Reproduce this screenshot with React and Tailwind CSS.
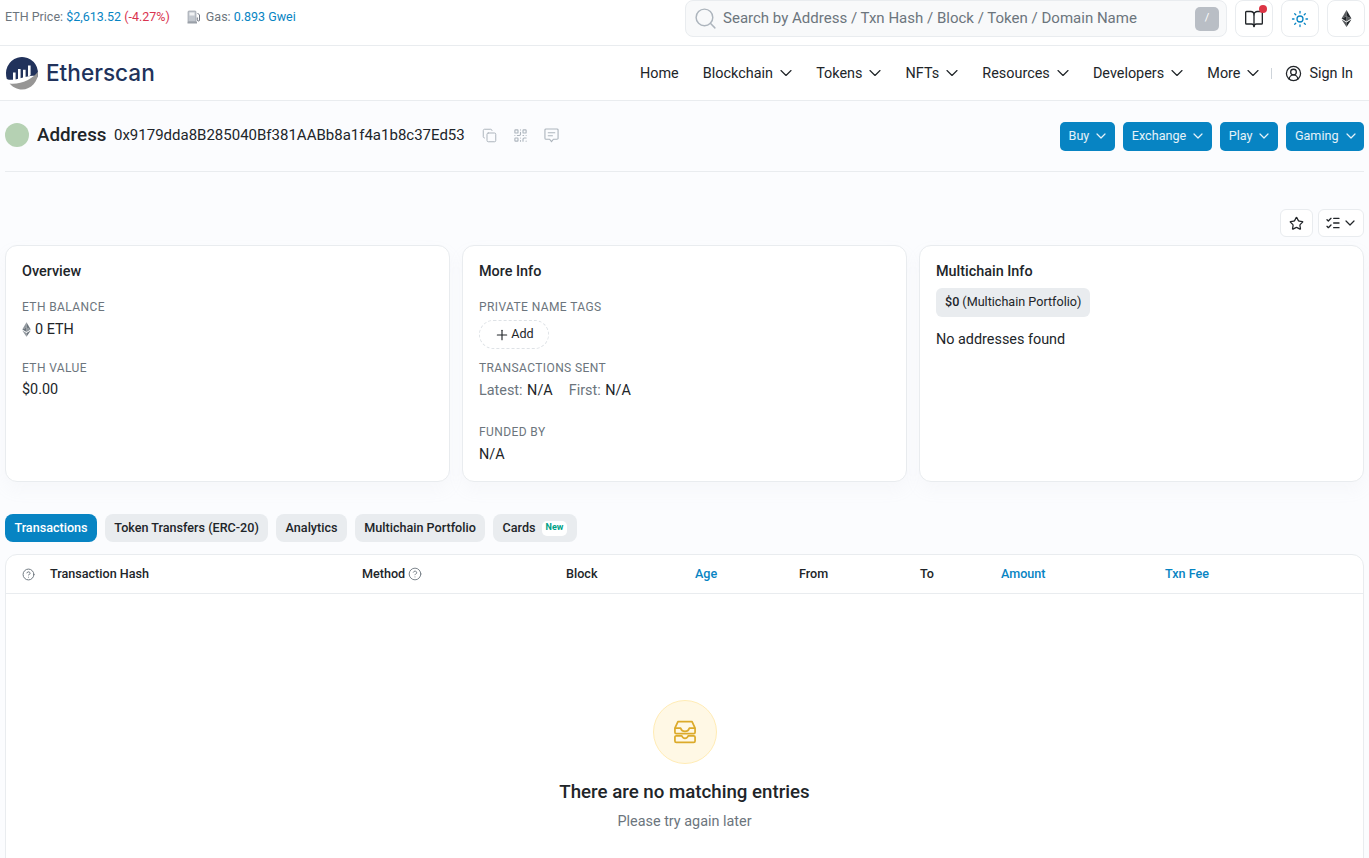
import React from "react";
import { ChevronDown, Search, BookOpen, Sun, Copy, QrCode, Star, ListChecks, Plus, CircleUserRound, CircleHelp } from "lucide-react";

const EthIcon = ({ className }) => (
  <svg viewBox="0 0 16 26" className={className} fill="currentColor">
    <path d="M8 0 L0.5 13 L8 9.6 Z" opacity="0.75" />
    <path d="M8 0 L15.5 13 L8 9.6 Z" />
    <path d="M0.5 13 L8 9.6 L8 17.4 Z" />
    <path d="M15.5 13 L8 9.6 L8 17.4 Z" opacity="0.75" />
    <path d="M0.5 14.6 L8 19 L8 26 Z" opacity="0.75" />
    <path d="M15.5 14.6 L8 19 L8 26 Z" />
  </svg>
);

const GasIcon = () => (
  <svg viewBox="0 0 14 14" className="w-[14px] h-[14px]">
    <rect x="1" y="1" width="8" height="11" rx="1" fill="#c3c8cf" stroke="#8f959d" strokeWidth="0.6" />
    <rect x="2.5" y="2.5" width="5" height="3" fill="#f1f2f4" />
    <rect x="0.5" y="11.5" width="9.5" height="2" fill="#9aa0a8" />
    <path d="M10.5 3 L12.5 5 V10 Q12.5 11.2 11.3 11 Q10.3 10.8 10.3 9.8 V7.5" fill="none" stroke="#5c6370" strokeWidth="0.9" />
  </svg>
);

const Logo = () => (
  <svg viewBox="0 0 34 34" className="w-[34px] h-[34px] shrink-0">
    <path d="M1 17a16 16 0 1 1 31.4 4.4C27 15.5 10 27 1.8 23 1.2 21.2 1 19.2 1 17z" fill="#21325b" />
    <path d="M33 15.5c.6 10-7 18-16 18-4.8 0-9.5-2.5-12.4-6C15 29 28 23 33 15.5z" fill="#979695" />
    <path d="M8 16.5h2.6v7.5l-2.6 1zM13 13h2.6v10.2l-2.6 1zM18 13.8h2.6v8l-2.6 1.1zM23 9.5h2.6v9.8l-2.6 1.5z" fill="#fff" />
  </svg>
);

const TrayIcon = () => (
  <svg viewBox="0 0 24 24" className="w-[26px] h-[26px] text-[#dcaa2a]" fill="none" stroke="currentColor" strokeWidth="1.6" strokeLinejoin="round">
    <path d="M5.5 2.5h13l2.8 6v3.7a1.3 1.3 0 0 1-1.3 1.3H4a1.3 1.3 0 0 1-1.3-1.3V8.5z" />
    <path d="M2.7 8.5h5.3q1 3 4 3t4-3h5.3" />
    <path d="M4 15.5h5q.8 2.3 3 2.3t3-2.3h5a1.3 1.3 0 0 1 1.3 1.3v3.4a1.3 1.3 0 0 1-1.3 1.3H4a1.3 1.3 0 0 1-1.3-1.3v-3.4A1.3 1.3 0 0 1 4 15.5z" />
  </svg>
);

const CommentIcon = () => (
  <svg viewBox="0 0 16 16" className="w-[15px] h-[15px]" fill="none" stroke="currentColor" strokeWidth="1.2" strokeLinejoin="round" strokeLinecap="round">
    <path d="M2.2 1h11.6A1.2 1.2 0 0 1 15 2.2v8.6a1.2 1.2 0 0 1-1.2 1.2H10l-2 2.6L6 12H2.2A1.2 1.2 0 0 1 1 10.8V2.2A1.2 1.2 0 0 1 2.2 1z" />
    <path d="M4.5 5h7M4.5 8.2h4.5" />
  </svg>
);

const navItems = ["Blockchain", "Tokens", "NFTs", "Resources", "Developers", "More"];

const tabs = ["Token Transfers (ERC-20)", "Analytics", "Multichain Portfolio"];

const Label = ({ children }) => (
  <div className="text-[12px] leading-[18px] tracking-[0.4px] text-[#6c757d] uppercase">{children}</div>
);

const Card = ({ title, children }) => (
  <div className="flex-1 h-[237px] bg-white border border-[#e9ecef] rounded-[12px] px-[16px] pt-[15px] shadow-[0_8px_16px_rgba(189,197,209,0.08)]">
    <h2 className="text-[14.4px] leading-[21px] font-medium text-[#212529]">{title}</h2>
    {children}
  </div>
);

const DropButton = ({ label }) => (
  <button className="h-[29px] pl-[9px] pr-[5.5px] flex items-center gap-[4px] rounded-[5px] bg-[#0784c3] text-white/90 text-[12.6px]">
    {label}
    <ChevronDown className="w-[16px] h-[16px]" strokeWidth={1.8} />
  </button>
);

export default function App() {
  return (
    <div className="h-[858px] overflow-hidden bg-[#fbfcfe] font-['Roboto',sans-serif] text-[#212529]">
      {/* barra superior */}
      <div className="h-[46px] bg-white border-b border-[#e9ecef] flex items-start pl-[5px] pr-[4px]">
        <div className="mt-[8px] text-[12.5px] text-[#6c757d]">
          ETH Price: <span className="text-[#0784c3]">$2,613.52</span> <span className="text-[#d9344f]">(-4.27%)</span>
        </div>
        <div className="mt-[8px] ml-[17px] flex items-center text-[12.5px] text-[#6c757d]">
          <GasIcon />
          <span className="ml-[5px]">Gas:</span>
          <span className="ml-[3px] text-[#0784c3]">0.893 Gwei</span>
        </div>
        <div className="ml-auto w-[542px] h-[37px] flex items-center bg-[#f8f9fa] border border-[#e9ecef] rounded-[8px] pl-[7px] pr-[7px]">
          <Search className="w-[25px] h-[25px] text-[#adb5bd]" strokeWidth={1.4} />
          <span className="ml-[5px] text-[15.03px] text-[#6c757d]">Search by Address / Txn Hash / Block / Token / Domain Name</span>
          <span className="ml-auto w-[24px] h-[24px] rounded-[5px] bg-[#b9bec5] text-white text-[11px] flex items-center justify-center">/</span>
        </div>
        <div className="ml-[8px] flex gap-[8px]">
          <button className="relative w-[38px] h-[37px] bg-white border border-[#e9ecef] rounded-[8px] flex items-center justify-center">
            <BookOpen className="w-[20px] h-[20px] text-[#212529]" strokeWidth={1.6} />
            <span className="absolute top-[4px] right-[5px] w-[8px] h-[8px] rounded-full bg-[#dc3545]" />
          </button>
          <button className="w-[38px] h-[37px] bg-white border border-[#e9ecef] rounded-[8px] flex items-center justify-center">
            <Sun className="w-[18px] h-[18px] text-[#0784c3]" strokeWidth={1.7} />
          </button>
          <button className="w-[38px] h-[37px] bg-white border border-[#e9ecef] rounded-[8px] flex items-center justify-center">
            <EthIcon className="w-[11px] h-[17px] text-[#212529]" />
          </button>
        </div>
      </div>

      {/* navegacion */}
      <div className="h-[55px] bg-white border-b border-[#e9ecef] flex items-center pl-[5px] pr-[16px]">
        <Logo />
        <span className="ml-[7px] font-['Inter',sans-serif] font-medium text-[22.6px] leading-none text-[#21325b]">Etherscan</span>
        <nav className="ml-auto mt-[1px] flex items-center text-[14.4px] text-[#212529]">
          <span className="mr-[4px]">Home</span>
          {navItems.map((item) => (
            <span key={item} className="ml-[20.2px] flex items-center gap-[3px]">
              {item}
              <ChevronDown className="w-[20px] h-[20px]" strokeWidth={1.4} />
            </span>
          ))}
          <span className="ml-[8px] w-px h-[11px] bg-[#ced4da]" />
          <span className="ml-[13px] flex items-center gap-[7px]">
            <CircleUserRound className="w-[17px] h-[17px]" strokeWidth={1.8} />
            Sign In
          </span>
        </nav>
      </div>

      <main className="px-[5px]">
        {/* encabezado de la direccion */}
        <div className="h-[71px] border-b border-[#e9ecef] flex items-center">
          <span className="-mt-[2px] w-[24px] h-[24px] rounded-full bg-[#b5d1b3]" />
          <h1 className="-mt-[2px] ml-[8px] text-[18.8px] font-medium text-[#212529]">Address</h1>
          <span className="-mt-[2px] ml-[7.5px] text-[15px] text-[#212529]">0x9179dda8B285040Bf381AABb8a1f4a1b8c37Ed53</span>
          <div className="-mt-[2px] ml-[17.5px] flex items-center gap-[16px] text-[#adb5bd]">
            <Copy className="w-[15px] h-[15px]" strokeWidth={1.6} />
            <QrCode className="w-[15px] h-[15px]" strokeWidth={1.8} />
            <CommentIcon />
          </div>
          <div className="ml-auto flex gap-[8px]">
            <DropButton label="Buy" />
            <DropButton label="Exchange" />
            <DropButton label="Play" />
            <DropButton label="Gaming" />
          </div>
        </div>

        <div className="h-[73px] flex items-end justify-end gap-[5px] pb-[8px]">
          <button className="w-[33px] h-[28px] bg-white border border-[#e9ecef] rounded-[6px] flex items-center justify-center">
            <Star className="w-[15px] h-[15px]" strokeWidth={2} />
          </button>
          <button className="w-[46px] h-[28px] bg-white border border-[#e9ecef] rounded-[6px] flex items-center justify-center gap-[1px]">
            <ListChecks className="w-[16px] h-[16px]" strokeWidth={2} />
            <ChevronDown className="w-[16px] h-[16px]" strokeWidth={1.8} />
          </button>
        </div>

        {/* tarjetas */}
        <div className="flex gap-[12px]">
          <Card title="Overview">
            <div className="mt-[16px]">
              <Label>ETH Balance</Label>
              <div className="mt-[3px] flex items-center gap-[4px] text-[14.4px] leading-[21px]">
                <EthIcon className="w-[9px] h-[15px] text-[#6c757d]" />
                0 ETH
              </div>
            </div>
            <div className="mt-[19px]">
              <Label>ETH Value</Label>
              <div className="mt-[2px] text-[14.4px] leading-[21px]">$0.00</div>
            </div>
          </Card>
          <Card title="More Info">
            <div className="mt-[16px]">
              <Label>Private Name Tags</Label>
              <div className="mt-[4px] w-[70px] h-[29px] rounded-full border border-dashed border-[#dee2e6] flex items-center justify-center gap-[1px] text-[12.6px]">
                <Plus className="w-[16px] h-[16px]" strokeWidth={1.7} />
                Add
              </div>
            </div>
            <div className="mt-[10px]">
              <Label>Transactions Sent</Label>
              <div className="mt-[3px] text-[14.4px] leading-[21px] text-[#6c757d]">
                Latest: <span className="ml-[1px] text-[#212529]">N/A</span>
                <span className="ml-[16px]">First: </span><span className="ml-[1px] text-[#212529]">N/A</span>
              </div>
            </div>
            <div className="mt-[22px]">
              <Label>Funded By</Label>
              <div className="mt-[3px] text-[14.4px] leading-[21px]">N/A</div>
            </div>
          </Card>
          <Card title="Multichain Info">
            <div className="mt-[6px] inline-flex h-[29px] items-center px-[9px] rounded-[6px] bg-[#e9ecef] text-[12.6px]">
              <span className="font-medium">$0</span><span className="ml-[3px]">(Multichain Portfolio)</span>
            </div>
            <div className="mt-[12px] text-[14.4px] leading-[21px]">No addresses found</div>
          </Card>
        </div>

        {/* pestañas */}
        <div className="mt-[32px] flex gap-[8px] text-[12.6px] font-medium">
          <span className="h-[28px] px-[9.4px] flex items-center rounded-[8px] bg-[#0784c3] text-white">Transactions</span>
          {tabs.map((tab) => (
            <span key={tab} className="h-[28px] px-[9.4px] flex items-center rounded-[8px] bg-[#e9ecef] text-[#212529]">{tab}</span>
          ))}
          <span className="h-[28px] px-[9.4px] flex items-center gap-[6px] rounded-[8px] bg-[#e9ecef] text-[#212529]">
            Cards
            <span className="h-[15px] px-[4px] flex items-center rounded-[5px] bg-white text-[9px] font-bold text-[#00a186]">New</span>
          </span>
        </div>

        {/* tabla */}
        <div className="mt-[12px] h-[320px] bg-white border border-[#e9ecef] rounded-[12px]">
          <div className="h-[39px] border-b border-[#e9ecef] flex items-center text-[12.6px] font-medium">
            <span className="w-[44px] pl-[16px]">
              <CircleHelp className="w-[13px] h-[13px] text-[#6c757d]" strokeWidth={1.8} />
            </span>
            <span className="w-[312px]">Transaction Hash</span>
            <span className="w-[204px] flex items-center gap-[3px]">
              Method
              <CircleHelp className="w-[14px] h-[14px] text-[#6c757d]" strokeWidth={1.5} />
            </span>
            <span className="w-[129px]">Block</span>
            <span className="w-[104px] text-[#0784c3]">Age</span>
            <span className="w-[121px]">From</span>
            <span className="w-[81px]">To</span>
            <span className="w-[164px] text-[#0784c3]">Amount</span>
            <span className="text-[#0784c3]">Txn Fee</span>
          </div>
          <div className="pt-[106px] flex flex-col items-center">
            <div className="w-[64px] h-[64px] rounded-full bg-[#fff8e5] border border-[#ffecb5] flex items-center justify-center">
              <TrayIcon />
            </div>
            <div className="mt-[15px] text-[18.7px] leading-[26px] font-medium text-[#212529]">There are no matching entries</div>
            <div className="mt-[6px] text-[14.4px] leading-[21px] text-[#6c757d]">Please try again later</div>
          </div>
        </div>
      </main>
    </div>
  );
}
